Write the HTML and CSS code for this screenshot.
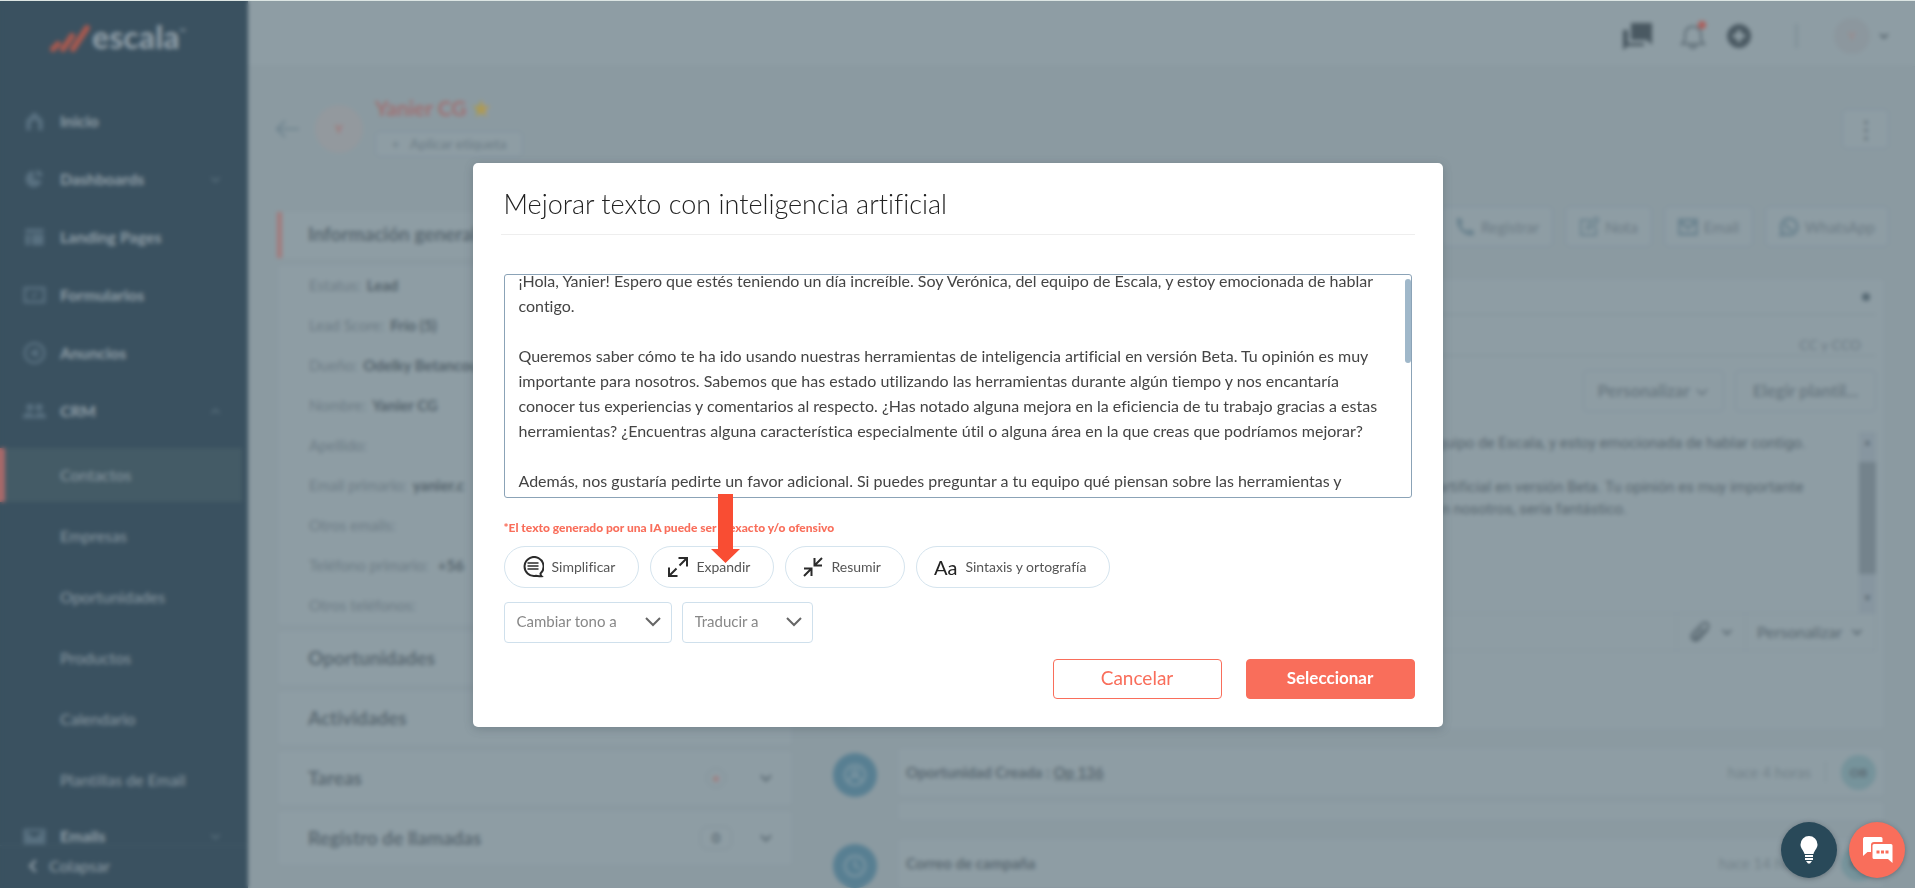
FILE: index.html
```html
<!DOCTYPE html>
<html lang="es">
<head>
<meta charset="utf-8">
<meta name="viewport" content="width=device-width, initial-scale=1">
<title>Escala</title>
<link rel="stylesheet" href="styles.css">
</head>
<body>
<svg class="sprite" aria-hidden="true">
  <symbol id="chev" viewBox="0 0 16 16"><path d="M3 5.500l5 5 5-5" fill="none" stroke="currentColor" stroke-width="2"/></symbol>
</svg>
<div class="app">
  <aside class="sidebar">
    <div class="logo">
      <svg width="42" height="28" viewBox="0 0 42 28"><path d="M3 25l5-5M13 25l9-13M23 25L37 4" stroke="#a8594f" stroke-width="6" stroke-linecap="round" fill="none"/></svg>
      <span>escala</span><small>™</small>
    </div>
    <nav class="nav">
      <a href="#" class="item"><svg viewBox="0 0 24 24"><path d="M3 11l9-9 9 9v11h-5v-8l-4-4-4 4v8H3z"/></svg>Inicio</a>
      <a href="#" class="item"><svg viewBox="0 0 24 24"><path d="M11 3a9 9 0 1 0 9 11l-9-2zM14 2v7h7a8 8 0 0 0-7-7z"/></svg>Dashboards<svg class="more"><use href="#chev"/></svg></a>
      <a href="#" class="item"><svg viewBox="0 0 24 24"><path d="M2 3h20v4H2zM2 9h5v12H2zM9 9h13v12H9z"/></svg>Landing Pages</a>
      <a href="#" class="item"><svg viewBox="0 0 24 24"><path d="M0 3h24v18H0zM3 6v12h18V6zM8 12l3 3 6-6" fill-rule="evenodd"/></svg>Formularios</a>
      <a href="#" class="item"><svg viewBox="0 0 24 24"><path d="M12 0a12 12 0 1 0 .1 0zM12 3a9 9 0 1 1-.1 0zM8 10l8-3v10l-8-3z" fill-rule="evenodd"/></svg>Anuncios</a>
      <a href="#" class="item"><svg viewBox="0 0 24 24"><circle cx="7" cy="8" r="4"/><circle cx="17" cy="8" r="4"/><path d="M-1 20c0-8 13-8 13 0zM12 20c0-8 13-8 13 0z"/></svg>CRM<svg class="more up"><use href="#chev"/></svg></a>
      <div class="sub">
        <a href="#" class="current">Contactos</a>
        <a href="#">Empresas</a>
        <a href="#">Oportunidades</a>
        <a href="#">Productos</a>
        <a href="#">Calendario</a>
        <a href="#">Plantillas de Email</a>
      </div>
      <a href="#" class="item"><svg viewBox="0 0 24 24"><path d="M0 4h24v17H0zM3 7l9 7 9-7z" fill-rule="evenodd"/></svg>Emails<svg class="more"><use href="#chev"/></svg></a>
    </nav>
    <button class="collapse"><svg width="18" height="18"><use href="#chev"/></svg>Colapsar</button>
  </aside>
  <div class="page">
    <header class="topbar">
      <svg width="30" height="28" viewBox="0 0 30 28"><path d="M9 1h21v22l-5-5H9z"/><path d="M1 8h5v13h16v3H6l-5 4z"/></svg>
      <span class="bell"><svg width="26" height="26" viewBox="0 0 26 26"><path d="M2 21h22l-3-4v-6c0-10-16-10-16 0v6zM10 22a3 3 0 0 0 6 0" fill="none" stroke="currentColor" stroke-width="2"/></svg><i></i></span>
      <svg width="26" height="26" viewBox="0 0 26 26"><path d="M13 1a12 12 0 1 0 .1 0zM11 7h4v4h4v4h-4v4h-4v-4H7v-4h4z" fill-rule="evenodd"/></svg>
      <span class="sep"></span>
      <span class="me">Y</span>
      <svg class="caret" width="12" height="12"><use href="#chev"/></svg>
    </header>
    <div class="contact">
      <svg width="24" height="20" viewBox="0 0 24 20"><path d="M10 2l-8 8 8 8M2 10h22" fill="none" stroke="#6f848f" stroke-width="2"/></svg>
      <span class="avatar">Y</span>
      <div class="who">
        <h1>Yanier CG <span class="star">★</span></h1>
        <button class="tag">+ &nbsp;&nbsp;Aplicar etiqueta</button>
      </div>
      <button class="kebab" aria-label="Más opciones">⋮</button>
    </div>
    <div class="columns">
      <section class="left">
        <h2 class="lead">Información general</h2>
        <dl class="card info">
          <div><dt>Estatus:</dt><dd>Lead</dd></div>
          <div><dt>Lead Score:</dt><dd>Frío (5)</dd></div>
          <div><dt>Dueño:</dt><dd>Odelky Betancourt</dd></div>
          <div><dt>Nombre:</dt><dd>Yanier CG</dd></div>
          <div><dt>Apellido:</dt></div>
          <div><dt>Email primario:</dt><dd>yanier.c</dd></div>
          <div><dt>Otros emails:</dt></div>
          <div><dt>Teléfono primario:</dt><dd>&nbsp;+56</dd></div>
          <div><dt>Otros teléfonos:</dt></div>
        </dl>
        <h2 class="card fold">Oportunidades</h2>
        <h2 class="card fold">Actividades</h2>
        <h2 class="card fold">Tareas <span class="count round">•</span><svg width="16" height="16"><use href="#chev"/></svg></h2>
        <h2 class="card fold">Registro de llamadas <span class="count">0</span><svg width="16" height="16"><use href="#chev"/></svg></h2>
      </section>
      <section class="right">
        <div class="actions">
          <button><svg viewBox="0 0 20 20"><path d="M2 1l4 0 2 5-2 2c1 3 3 5 6 6l2-2 5 2v4c-9 3-19-8-17-17z"/></svg>Registrar</button>
          <button><svg viewBox="0 0 20 20"><path d="M11 3H2v15h15v-8M8 12l1-4 8-8 3 3-8 8z" fill="none" stroke="currentColor" stroke-width="2"/></svg>Nota</button>
          <button><svg viewBox="0 0 20 20"><path d="M1 3h18v14H1zM1 4l9 7 9-7" fill="none" stroke="currentColor" stroke-width="3"/></svg>Email</button>
          <button><svg viewBox="0 0 20 20"><path d="M2 18l1-5a8 8 0 1 1 4 4zM7 6c0 4 3 7 7 7" fill="none" stroke="currentColor" stroke-width="3"/></svg>WhatsApp</button>
        </div>
        <div class="card composer">
          <div class="line to"><i class="dot"></i></div>
          <div class="line cc">CC y CCO</div>
          <div class="line subject"><button>Personalizar <svg width="16" height="16"><use href="#chev"/></svg></button><button>Elegir plantil...</button></div>
          <div class="message">
            <div class="copy"><p>quipo de Escala, y estoy emocionada de hablar contigo.</p><p>artificial en versión Beta. Tu opinión es muy importante</p><p class="short">con nosotros, sería fantástico.</p></div>
            <div class="bar"><b>▲</b><i></i><b>▼</b></div>
          </div>
          <div class="tools">
            <span><svg width="24" height="24" viewBox="0 0 24 24"><path d="M20 9l-9 10c-5 4-10-1-6-6l9-9c4-4 9 1 5 5l-9 9c-3 2-4 0-3-2l8-8" fill="none" stroke="currentColor" stroke-width="2"/></svg><svg width="14" height="14"><use href="#chev"/></svg></span>
            <span>Personalizar <svg width="14" height="14"><use href="#chev"/></svg></span>
          </div>
        </div>
        <div class="event">
          <span class="mark"><svg width="24" height="24" viewBox="0 0 24 24"><circle cx="12" cy="12" r="10"/><circle cx="12" cy="9" r="3"/><path d="M6 18c1-6 11-6 12 0"/></svg></span>
          <div class="body"><div class="card row"><span>Oportunidad Creada : <u>Op 136</u></span><time>hace 4 horas</time><span class="ob">OB</span></div><div class="card strip"></div></div>
        </div>
        <div class="event">
          <span class="mark"><svg width="24" height="24" viewBox="0 0 24 24"><circle cx="12" cy="12" r="10"/><path d="M12 6v6l5 3"/></svg></span>
          <div class="body"><div class="card row"><span>Correo de campaña</span><time>hace 14 horas</time><span class="ob">OB</span></div></div>
        </div>
      </section>
    </div>
  </div>
</div>

<div class="overlay">
  <div class="modal" role="dialog" aria-modal="true" aria-labelledby="title">
    <h2 id="title">Mejorar texto con inteligencia artificial</h2>
    <div class="editor">
      <textarea id="text" aria-label="Texto" spellcheck="false" wrap="off">¡Hola, Yanier! Espero que estés teniendo un día increíble. Soy Verónica, del equipo de Escala, y estoy emocionada de hablar
contigo.

Queremos saber cómo te ha ido usando nuestras herramientas de inteligencia artificial en versión Beta. Tu opinión es muy
importante para nosotros. Sabemos que has estado utilizando las herramientas durante algún tiempo y nos encantaría
conocer tus experiencias y comentarios al respecto. ¿Has notado alguna mejora en la eficiencia de tu trabajo gracias a estas
herramientas? ¿Encuentras alguna característica especialmente útil o alguna área en la que creas que podríamos mejorar?

Además, nos gustaría pedirte un favor adicional. Si puedes preguntar a tu equipo qué piensan sobre las herramientas y













</textarea>
      <span class="thumb"></span>
    </div>
    <p class="warn">*El texto generado por una IA puede ser inexacto y/o ofensivo</p>
    <div class="pills">
      <button><svg width="22" height="22" viewBox="0 0 22 22"><path d="M18.500 17.500A9.500 9.500 0 1 0 14 19.800c2 .2 3.500.5 5.500.4-.8-.8-1-1.500-1-2.700z"/><path d="M5.500 7h11M5.500 10h11M5.500 13h11" stroke-width="1.300"/></svg>Simplificar</button>
      <button><svg width="20" height="20" viewBox="0 0 20 20"><path d="M10.500 1H19v8.500M19 1l-7.500 7.500M1 10.500V19h8.500M1 19l7.500-7.500"/></svg>Expandir</button>
      <button><svg width="20" height="20" viewBox="0 0 20 20"><path d="M11.500 1v7.500H19M11.500 8.500L19 1M1 11.500h7.500V19M8.500 11.500L1 19"/></svg>Resumir</button>
      <button><span class="aa" aria-hidden="true">Aa</span>Sintaxis y ortografía</button>
    </div>
    <div class="picks">
      <div class="pick tone"><select aria-label="Cambiar tono a"><option>Cambiar tono a</option></select><svg width="16" height="10" viewBox="0 0 16 10"><path d="M1 1l7 7 7-7"/></svg></div>
      <div class="pick lang"><select aria-label="Traducir a"><option>Traducir a</option></select><svg width="16" height="10" viewBox="0 0 16 10"><path d="M1 1l7 7 7-7"/></svg></div>
    </div>
    <div class="foot"><button class="cancel">Cancelar</button><button class="select">Seleccionar</button></div>
    <svg class="pointer" width="29" height="69" viewBox="0 0 29 69"><path d="M7 0h15v55h7L14.500 69 0 55h7z" fill="#f94d33"/></svg>
  </div>
</div>
<div class="fabs">
  <button class="idea" aria-label="Ideas"><svg width="18" height="28" viewBox="0 0 18 28"><path d="M9 0a8.500 8.500 0 0 1 8.500 8.500c0 4-3 5.500-4 9.500h-9c-1-4-4-5.500-4-9.500A8.500 8.500 0 0 1 9 0zM5 19h8v2H5zM5 22h8v2H5zM6 25h6l-2 2.500H8z" fill="#fff"/></svg></button>
  <button class="chat" aria-label="Chat"><svg width="31" height="28" viewBox="0 0 31 28"><path d="M2 1h17a1.500 1.500 0 0 1 1.500 1.500V6H12a3 3 0 0 0-3 3v7H5.500L1 20V2.500z" fill="#fff"/><path d="M12 8h17a1.500 1.500 0 0 1 1.500 1.500V27L26 23H12a1.500 1.500 0 0 1-1.500-1.500v-12A1.500 1.500 0 0 1 12 8z" fill="#fff"/><path d="M14.500 14.500h3v3h-3zM19 14.500h3v3h-3zM23.500 14.500h3v3h-3z" fill="#f96e5b"/></svg></button>
</div>
<script src="app.js"></script>
</body>
</html>
```
FILE: app.js
```js
document.getElementById('text').scrollTop = 19;
```
FILE: styles.css
```css
* { box-sizing: border-box; }
body { margin: 0; height: 100vh; overflow: hidden; font: 15px/20px Lato, "Open Sans", sans-serif; font-variant-ligatures: none; color: #586770; background: #8b9aa1; }
button, select, textarea { font: inherit; font-variant-ligatures: none; color: inherit; }
a { color: inherit; text-decoration: none; }
h1, h2, p, dl, dd { margin: 0; }
svg { flex: none; }
.sprite { position: absolute; width: 0; height: 0; }
.app { display: flex; height: 100vh; overflow: hidden; border-top: 1px solid #dce5e3; }

.sidebar { width: 248px; flex: none; display: flex; flex-direction: column; background: #3a5160; color: #92a0a9; }
.logo { flex: none; height: 91px; display: flex; align-items: flex-start; padding: 23px 0 0 50px; font-size: 32px; font-weight: 900; line-height: 26px; color: #8c9ba5; }
.logo small { font-size: 8px; line-height: 16px; }
.nav { flex: 1; min-height: 0; overflow: hidden; }
.item { display: flex; align-items: center; gap: 13px; height: 58px; padding: 0 26px 0 22px; font-size: 16px; font-weight: 700; }
.item svg { width: 25px; height: 22px; fill: #587080; color: #5a707d; }
.item .more { width: 13px; height: 13px; margin-left: auto; }
.up { transform: rotate(180deg); }
.sub { display: grid; gap: 7px; margin-top: 8px; font-size: 16px; color: #8d9ca5; }
.sub a { height: 54px; display: flex; align-items: center; padding-left: 60px; margin-right: 6px; }
.sub .current { background: #445b66; border-left: 5px solid #a8696a; padding-left: 55px; }
.collapse { flex: none; height: 43px; display: flex; align-items: center; gap: 7px; padding: 0 0 2px 24px; border: 0; border-top: 1px solid #435a67; background: none; font-size: 16px; }
.collapse svg { transform: rotate(90deg); }

.page { flex: 1; min-width: 0; }
.topbar { height: 66px; display: flex; justify-content: flex-end; align-items: center; padding: 4px 25px 0 0; background: #8e9da4; border-bottom: 1px solid #87969d; color: #4a5962; fill: currentColor; }
.bell { position: relative; height: 26px; margin: 0 20px 0 28px; color: #5f6e77; }
.bell i { position: absolute; right: 0; top: -2px; width: 8px; height: 8px; border-radius: 50%; background: #ac5f5c; }
.sep { width: 3px; height: 24px; margin: 0 36px 0 43px; background: #82929a; }
.me { width: 36px; height: 36px; border-radius: 50%; background: #8c979e; color: #a48584; font-size: 12px; line-height: 36px; text-align: center; }
.caret { margin-left: 8px; }
.contact { display: flex; align-items: center; padding: 26px 26px 0 27px; height: 98px; }
.avatar { width: 48px; height: 48px; margin: 0 12px 0 16px; border-radius: 50%; background: #93999e; color: #a47474; text-align: center; line-height: 48px; font-size: 12px; font-weight: 700; }
.who { padding-bottom: 5px; }
.who h1 { font-size: 21px; line-height: 24px; margin: 0 0 11px; color: #a07173; }
.star { color: #ae9a54; }
.tag, .kebab, .actions button, .subject button { border: 1px solid #8192a0; border-radius: 5px; background: #8e9da4; }
.tag { display: block; width: 148px; height: 26px; font-size: 14px; padding: 0; color: #6b7b84; }
.kebab { margin-left: auto; width: 47px; height: 40px; font-size: 24px; padding: 0; }
.columns { display: flex; gap: 43px; padding: 41px 26px 0 29px; }
.card { background: #8e9da4; border: 1px solid #8997a0; border-radius: 4px; }
.left { flex: 0 0 516px; padding-top: 6px; }
.left h2 { font-size: 18px; color: #5a6972; }
.left .lead { height: 46px; border-left: 5px solid #a37b7c; padding: 12px 0 0 26px; line-height: 20px; background: #8e9da4; font-size: 19px; }
.info { margin-top: 6px; height: 362px; padding: 0 31px; }
.info div { display: flex; gap: 6px; height: 40px; align-items: center; color: #6c7b84; }
.info dd { font-weight: 700; color: #53626b; }
.left .fold { display: flex; align-items: center; height: 56px; margin-top: 4px; padding: 0 18px 0 30px; font-size: 19px; }
.count { margin-left: auto; margin-right: 26px; width: 32px; height: 24px; border: 1px solid #82919a; border-radius: 8px; text-align: center; font-size: 14px; line-height: 22px; }
.round { width: 20px; height: 20px; line-height: 18px; margin-right: 32px; border-radius: 50%; color: #a08081; }
.right { flex: 1; min-width: 0; }
.actions { display: flex; justify-content: flex-end; gap: 12px; }
.actions button { height: 41px; display: flex; align-items: center; gap: 6px; padding: 0 13px; color: #6c7b84; font-size: 15px; }
.actions svg { width: 20px; height: 20px; fill: #6b838f; color: #6b838f; }
.composer { margin: 31px 4px 0 8px; height: 452px; padding: 0 8px; }
.line { display: flex; justify-content: flex-end; align-items: center; border-bottom: 1px solid #82929a; }
.to { height: 36px; }
.dot { width: 8px; height: 8px; margin-right: 6px; border-radius: 50%; background: #566973; }
.cc { height: 41px; padding: 20px 15px 0 0; color: #6c7b84; font-size: 14px; }
.subject { height: 69px; gap: 11px; border: 0; }
.subject button { width: 141px; height: 42px; font-size: 17px; padding: 0; font-weight: 700; color: #6b7a83; }
.subject svg, .tools svg { vertical-align: middle; }
.message { display: flex; justify-content: flex-end; height: 188px; padding-top: 7px; font-family: Roboto, sans-serif; font-size: 15px; }
.copy { width: 422px; line-height: 22px; }
.copy p { margin-bottom: 22px; white-space: nowrap; }
.copy .short { margin: -22px 0 0 -12px; }
.bar { width: 17px; display: grid; grid-template-rows: 30px 112px 1fr; background: #8796a0; text-align: center; }
.bar b { font-size: 9px; }
.bar i { background: #74838c; }
.bar b:last-child { padding-top: 14px; }
.tools { display: flex; justify-content: flex-end; height: 38px; border: 1px solid #8695a0; }
.tools span { display: flex; align-items: center; gap: 8px; padding: 0 11px; border-left: 1px solid #86959d; font-size: 16px; }
.event { display: flex; gap: 20px; margin-top: 17px; margin-right: 4px; }
.mark { flex: none; width: 44px; height: 44px; margin: 6px 0 0 -3px; border-radius: 50%; background: #587f92; display: grid; place-items: center; }
.mark svg { fill: none; stroke: #7f98a4; stroke-width: 2; }
.body { flex: 1; }
.row { display: flex; align-items: center; height: 50px; padding: 0 8px; font-weight: 700; font-size: 15px; color: #5a6972; }
.row time { margin-left: auto; padding-right: 14px; font-weight: 400; color: #73828a; border-right: 1px solid #82929a; }
.ob { width: 35px; height: 35px; margin: 0 0 0 15px; border-radius: 50%; background: #76939b; font-size: 12px; line-height: 35px; text-align: center; }
.strip { height: 20px; margin-top: 4px; }

.overlay { position: fixed; inset: 1px 0 0; display: grid; place-items: center; backdrop-filter: blur(2px); }
.modal { position: relative; width: 970px; max-width: 96vw; padding: 20px 28px 28px 31px; background: #fff; border-radius: 5px; box-shadow: 0 2px 10px rgba(60, 75, 85, .3); color: #444; }
.modal h2 { margin: 0 0 39px -3px; padding: 0 0 9px 3px; border-bottom: 1px solid #eee; font-size: 27px; line-height: 42px; font-weight: 300; color: #222; }
.editor { position: relative; margin-right: 3px; }
.modal textarea { display: block; width: 100%; height: 224px; padding: 12px 14px; border: 1px solid #8ba3b7; border-radius: 3px; outline: 0; resize: none; overflow: hidden; font-size: 16px; line-height: 25px; color: #444; background: #fff; }
.thumb { position: absolute; right: 1px; top: 5px; width: 6px; height: 84px; background: #a0b8ca; border-radius: 3px; }
.warn { margin: 20px 0 8px; font-size: 12px; line-height: 20px; font-weight: 900; color: #f96e5b; }
.pills { display: flex; flex-wrap: wrap; gap: 11px; }
.pills button { display: flex; align-items: center; gap: 8px; height: 42px; padding: 0 23px 0 17px; border: 1px solid #d5e4ee; border-radius: 21px; background: #fff; font-size: 14px; color: #555; }
.pills svg { fill: none; stroke: #2b2b2b; stroke-width: 2; }
.aa { font-size: 20px; color: #222; }
.picks { display: flex; gap: 10px; margin: 14px 0 16px; }
.pick { display: grid; align-items: center; }
.pick > * { grid-area: 1 / 1; }
.tone { width: 168px; }
.lang { width: 131px; }
.pick select { width: 100%; height: 41px; padding: 0 12px 2px; appearance: none; border: 1px solid #cfe0ec; border-radius: 4px; background: #fff; font-size: 15px; color: #888; }
.pick svg { justify-self: end; margin-right: 11px; pointer-events: none; fill: none; stroke: #666; stroke-width: 2; }
.foot { display: flex; justify-content: flex-end; gap: 24px; }
.foot button { width: 169px; height: 40px; border: 1px solid #f96e5b; border-radius: 4px; padding: 0 0 2px; }
.foot .cancel { background: #fff; color: #f96e5b; font-size: 19px; }
.foot .select { background: #f96e5b; color: #fff; font-size: 17px; font-weight: 700; }
.pointer { position: absolute; left: 238px; top: 331px; }
.fabs { position: fixed; right: 10px; bottom: 10px; display: flex; gap: 12px; }
.fabs button { width: 56px; height: 56px; padding: 0; border: 0; border-radius: 50%; display: grid; place-items: center; box-shadow: 0 1px 5px rgba(40, 50, 60, .4); }
.fabs .idea { background: #294959; }
.fabs .chat { background: #f96e5b; }
```
